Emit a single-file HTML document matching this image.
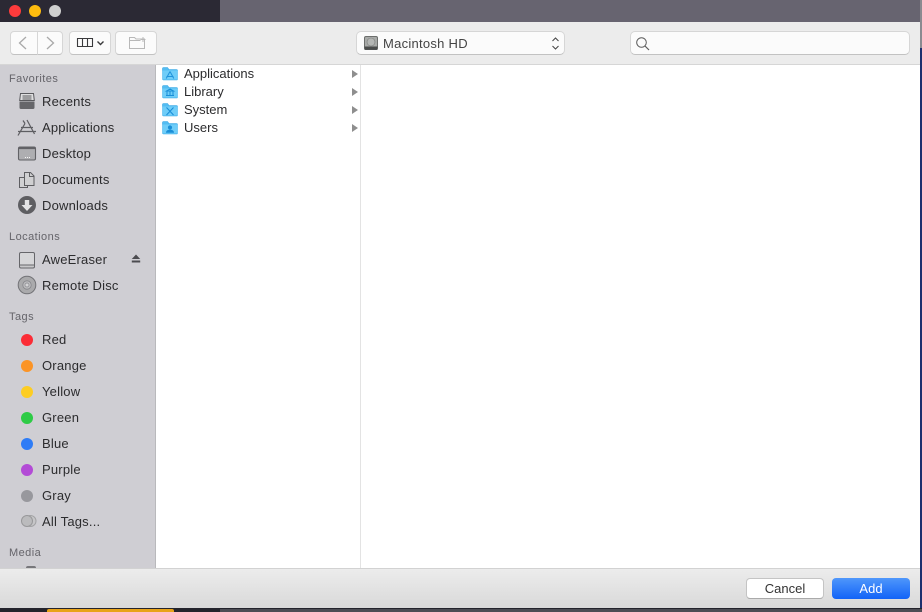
<!DOCTYPE html>
<html><head><meta charset="utf-8">
<style>
html,body{margin:0;padding:0;background:#1e2030}
body{width:922px;height:612px;overflow:hidden;position:relative;font-family:"Liberation Sans",sans-serif;-webkit-font-smoothing:antialiased}
.a{position:absolute}
.t{position:absolute;white-space:nowrap;font-size:13px;letter-spacing:.2px;line-height:16px;color:#2c2c2e}
.c{position:absolute;white-space:nowrap;font-size:13px;line-height:16px;color:#2c2c2e}
.h{position:absolute;white-space:nowrap;font-size:11px;letter-spacing:.45px;line-height:14px;color:#65646a}
.btn{position:absolute;box-sizing:border-box;background:#fbfbfb;border:1px solid #d6d6d6;border-bottom-color:#c2c2c2;border-radius:4px}
.dot{position:absolute;left:21px;width:12px;height:12px;border-radius:50%}
svg{position:absolute;overflow:visible}
.s{filter:blur(.3px)}
</style></head><body>
<div class="a" style="left:0;top:0;width:220px;height:22px;background:#2b2934"></div>
<div class="a" style="left:220px;top:0;width:700px;height:22px;background:#676470"></div>
<div class="a" style="left:920px;top:0;width:2px;height:48px;background:#8a8a90"></div>
<div class="a" style="left:920px;top:48px;width:2px;height:564px;background:#1d2f6e"></div>
<div class="a" style="left:0;top:608px;width:922px;height:4px;background:#24242c"></div>
<div class="a" style="left:47px;top:609px;width:127px;height:3px;background:#e8a319;border-radius:2px 2px 0 0"></div>
<div class="a" style="left:220px;top:609px;width:702px;height:3px;background:#4c4c54"></div>

<div class="dot" style="left:9px;top:5px;background:#fc3b3c"></div>
<div class="dot" style="left:29px;top:5px;background:#fdbc0e"></div>
<div class="dot" style="left:49px;top:5px;background:#cfcfcf"></div>

<!-- toolbar -->
<div class="a" style="left:0;top:22px;width:920px;height:42px;background:#ececec;border-bottom:1px solid #d6d6d6"></div>
<div class="btn" style="left:10px;top:31px;width:28px;height:24px;border-radius:4px 0 0 4px"></div>
<div class="btn" style="left:37px;top:31px;width:26px;height:24px;border-radius:0 4px 4px 0"></div>
<svg class="s" style="left:0;top:0" width="170" height="60" fill="none">
<path d="M26 37l-6.500 6 6.500 6" stroke="#a9a9a9" stroke-width="1.300"/>
<path d="M47 37l6.500 6-6.500 6" stroke="#a9a9a9" stroke-width="1.300"/>
</svg>
<div class="btn" style="left:69px;top:31px;width:42px;height:24px"></div>
<svg class="s" style="left:0;top:0" width="170" height="60" fill="none">
<path d="M77.500 38.500h15v8h-15zM82.500 38.500v8M87.500 38.500v8" stroke="#3a3a3c" stroke-width="1.100"/>
<path d="M97.500 41.500l3 3 3-3" stroke="#3a3a3c" stroke-width="1.400"/>
</svg>
<div class="btn" style="left:115px;top:31px;width:42px;height:24px"></div>
<svg class="s" style="left:0;top:0" width="170" height="60" fill="none">
<path d="M129.500 48.500v-11h5l1.500 1.500h8.500v9.500z" stroke="#b8b8b8" stroke-width="1"/>
<path d="M129.500 40.500h11M143 37v5M140.500 39.500h5" stroke="#b8b8b8" stroke-width="1"/>
</svg>

<div class="btn" style="left:356px;top:31px;width:209px;height:24px;border-radius:5px"></div>
<svg class="s" style="left:364px;top:36px" width="15" height="15">
<rect x="0.500" y="0.500" width="13" height="13" rx="1.500" fill="#a8aaa8" stroke="#6c6e6c"/>
<circle cx="7" cy="6" r="4" fill="#b4b6b4" stroke="#7a7c7a" stroke-width=".6"/>
<rect x="0.500" y="10.500" width="13" height="3.300" fill="#4a4c4b"/>
</svg>
<div class="c" style="left:383px;top:35.500px;font-size:13px;letter-spacing:.27px;color:#444">Macintosh HD</div>
<svg class="s" style="left:550px;top:36px" width="12" height="15" fill="none" stroke="#444" stroke-width="1">
<path d="M2.500 5l3-3 3 3M2.500 10l3 3 3-3"/>
</svg>

<div class="btn" style="left:630px;top:31px;width:280px;height:24px;border-radius:5px"></div>
<svg class="s" style="left:635px;top:36px" width="16" height="15" fill="none" stroke="#5c5c5c" stroke-width="1">
<circle cx="6.500" cy="6.500" r="4.800"/><path d="M10 10l4 4" stroke-width="1.200"/>
</svg>

<!-- sidebar -->
<div class="a" style="left:0;top:65px;width:155px;height:503px;background:#cfced3;border-right:1px solid #b9b9bc;overflow:hidden"></div>
<div class="h" style="left:9px;top:72px">Favorites</div>
<div class="t" style="left:42px;top:93.500px">Recents</div>
<div class="t" style="left:42px;top:119.500px">Applications</div>
<div class="t" style="left:42px;top:145.500px">Desktop</div>
<div class="t" style="left:42px;top:171.500px">Documents</div>
<div class="t" style="left:42px;top:197.500px">Downloads</div>
<div class="h" style="left:9px;top:230px">Locations</div>
<div class="t" style="left:42px;top:251.500px">AweEraser</div>
<div class="t" style="left:42px;top:277.500px">Remote Disc</div>
<div class="h" style="left:9px;top:310px">Tags</div>
<div class="t" style="left:42px;top:331.500px">Red</div>
<div class="t" style="left:42px;top:357.500px">Orange</div>
<div class="t" style="left:42px;top:383.500px">Yellow</div>
<div class="t" style="left:42px;top:409.500px">Green</div>
<div class="t" style="left:42px;top:435.500px">Blue</div>
<div class="t" style="left:42px;top:461.500px">Purple</div>
<div class="t" style="left:42px;top:487.500px">Gray</div>
<div class="t" style="left:42px;top:513.500px">All Tags...</div>
<div class="h" style="left:9px;top:546px">Media</div>

<div class="dot" style="top:334px;background:#fb2c36"></div>
<div class="dot" style="top:360px;background:#fb9426"></div>
<div class="dot" style="top:386px;background:#fdcd23"></div>
<div class="dot" style="top:412px;background:#2ecb46"></div>
<div class="dot" style="top:438px;background:#2e7cf6"></div>
<div class="dot" style="top:464px;background:#b34bd6"></div>
<div class="dot" style="top:490px;background:#98989d"></div>
<svg class="s" style="left:19px;top:513px" width="18" height="16">
<circle cx="11.500" cy="8" r="5.500" fill="#c6c6c8" stroke="#a2a2a4"/>
<circle cx="8" cy="8" r="5.500" fill="#bbbbbd" stroke="#98989a"/>
</svg>

<svg class="s" style="left:0;top:0" width="155" height="300" fill="none">
<!-- recents -->
<path d="M20.500 93.500h13l.8 7h-14.600z" fill="#dededf" stroke="#5a5a5e" stroke-width="1"/>
<path d="M22.500 96h9M22.500 98h9M22.500 100h9" stroke="#5a5a5e" stroke-width=".9"/>
<path d="M19.500 101.500h15v6a1.500 1.500 0 0 1-1.500 1.500h-12a1.500 1.500 0 0 1-1.500-1.500z" fill="#66666a"/>
<!-- applications -->
<path d="M27 120l7.500 14M25 123.500l-7 12M18 131.500h18M21 127.500h12" stroke="#5e5e62" stroke-width="1.200"/>
<path d="M23 120.500l2 3" stroke="#5e5e62" stroke-width="1.200"/>
<!-- desktop -->
<rect x="18.500" y="147" width="17" height="13" rx="1.500" fill="#aeaeb1" stroke="#626266" stroke-width="1.100"/>
<rect x="19" y="147.500" width="16" height="1.600" fill="#626266"/>
<path d="M25 157.500h.9M27 157.500h.9M29 157.500h.9" stroke="#fff" stroke-width="1"/>
<!-- documents -->
<path d="M19.500 177.500h6l2 2v8h-8z" fill="#d0d0d2" stroke="#5e5e62"/>
<path d="M24.500 172.500h6l3.500 3.500v9.500h-9.500z" fill="#d0d0d2" stroke="#5e5e62"/>
<path d="M29.500 172.500v4h4" stroke="#5e5e62"/>
<!-- downloads -->
<circle cx="27" cy="205" r="9" fill="#5e5e62"/>
<path d="M24.800 200h4.400v5h3.300L27 211l-5.500-6h3.300z" fill="#e2e2e4"/>
<!-- AweEraser -->
<path d="M21 252.500h12a1.500 1.500 0 0 1 1.500 1.500v11h-15v-11a1.500 1.500 0 0 1 1.500-1.500z" fill="#d6d6d8" stroke="#66666a"/>
<path d="M19.500 265h15v1.500a1.500 1.500 0 0 1-1.500 1.500h-12a1.500 1.500 0 0 1-1.500-1.500z" fill="#c8c8ca" stroke="#66666a"/>
<!-- eject -->
<path d="M136 254.500l4.200 4.500h-8.400z" fill="#4c4c50"/><rect x="131.800" y="260.500" width="8.400" height="2" fill="#4c4c50"/>
<!-- remote disc -->
<circle cx="27" cy="285" r="8.800" fill="#aaaaac" stroke="#737377"/>
<circle cx="27" cy="285" r="4.200" fill="#bdbdbf" stroke="#85858a" stroke-width=".8"/>
<circle cx="27" cy="285" r="2" fill="#d4d4d6" stroke="#85858a" stroke-width=".7"/>
</svg>
<div class="a" style="left:26px;top:566px;width:10px;height:2px;background:#77777b;border-radius:3px 3px 0 0"></div>

<!-- columns -->
<div class="a" style="left:156px;top:65px;width:764px;height:503px;background:#fff"></div>
<div class="a" style="left:360px;top:65px;width:1px;height:503px;background:#e3e3e3"></div>

<svg class="s" style="left:162px;top:66px" width="16" height="70">
<g>
<path d="M.5 2.500a1 1 0 0 1 1-1h4l1.500 2h7.500a1 1 0 0 1 1 1v8.500a1 1 0 0 1-1 1h-13a1 1 0 0 1-1-1z" fill="#53bdf2" stroke="#3aa7e4" stroke-width=".6"/>
<rect x=".5" y="4.500" width="15" height="9" fill="#6fcdf8"/>
<path d="M8 5.500l-3.800 7M8 5.500l3.800 7M4.500 10.500h7" stroke="#1f93dc" fill="none" stroke-width="1"/>
</g>
<g transform="translate(0,18)">
<path d="M.5 2.500a1 1 0 0 1 1-1h4l1.500 2h7.500a1 1 0 0 1 1 1v8.500a1 1 0 0 1-1 1h-13a1 1 0 0 1-1-1z" fill="#53bdf2" stroke="#3aa7e4" stroke-width=".6"/>
<rect x=".5" y="4.500" width="15" height="9" fill="#6fcdf8"/>
<path d="M8 5l-3.500 2h7zM5 7.500v3.500M8 7.500v3.500M11 7.500v3.500M4 11.500h8" stroke="#1a8fd8" fill="none" stroke-width="1"/>
</g>
<g transform="translate(0,36)">
<path d="M.5 2.500a1 1 0 0 1 1-1h4l1.500 2h7.500a1 1 0 0 1 1 1v8.500a1 1 0 0 1-1 1h-13a1 1 0 0 1-1-1z" fill="#53bdf2" stroke="#3aa7e4" stroke-width=".6"/>
<rect x=".5" y="4.500" width="15" height="9" fill="#6fcdf8"/>
<path d="M4.500 5.500l7 7.500M11.500 5.500l-7 7.500" stroke="#1a8fd8" fill="none" stroke-width="1.100"/>
</g>
<g transform="translate(0,54)">
<path d="M.5 2.500a1 1 0 0 1 1-1h4l1.500 2h7.500a1 1 0 0 1 1 1v8.500a1 1 0 0 1-1 1h-13a1 1 0 0 1-1-1z" fill="#53bdf2" stroke="#3aa7e4" stroke-width=".6"/>
<rect x=".5" y="4.500" width="15" height="9" fill="#6fcdf8"/>
<circle cx="8" cy="7.500" r="2.100" fill="#1a8fd8"/><path d="M4 12.800c0-2.200 1.700-3 4-3s4 .8 4 3z" fill="#1a8fd8"/>
</g>
</svg>
<div class="c" style="left:184px;top:65.500px">Applications</div>
<div class="c" style="left:184px;top:83.500px">Library</div>
<div class="c" style="left:184px;top:101.500px">System</div>
<div class="c" style="left:184px;top:119.500px">Users</div>
<svg class="s" style="left:352px;top:69.500px" width="8" height="64" fill="#8e8e8e">
<path d="M0 0l6 4-6 4zM0 18l6 4-6 4zM0 36l6 4-6 4zM0 54l6 4-6 4z"/>
</svg>

<!-- footer -->
<div class="a" style="left:0;top:568px;width:920px;height:40px;background:linear-gradient(#ececec,#d9d9d9);border-top:1px solid #d2d2d2;box-sizing:border-box"></div>
<div class="a" style="left:746px;top:578px;width:78px;height:21px;box-sizing:border-box;background:#fff;border:1px solid #c4c4c4;border-bottom-color:#aaa;border-radius:4px;text-align:center;font-size:13px;line-height:19px;color:#333">Cancel</div>
<div class="a" style="left:832px;top:578px;width:78px;height:21px;background:linear-gradient(#4f97fb,#1263f7);border-radius:4px;text-align:center;font-size:13px;line-height:21px;color:#fff">Add</div>
</body></html>
